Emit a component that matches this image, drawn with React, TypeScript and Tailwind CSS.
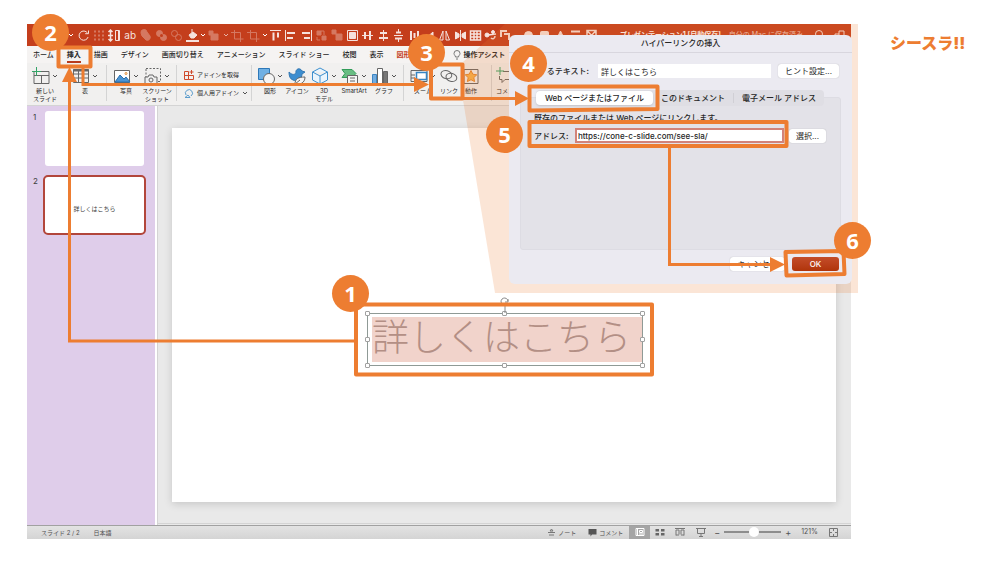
import type { ReactNode } from "react";

const CJK = "font-['Inter','Noto_Sans_CJK_JP',sans-serif]";

const Chevron = ({ className = "text-neutral-600" }: { className?: string }) => (
  <svg viewBox="0 0 6 6" className={`size-[6px] shrink-0 ${className}`} fill="none" stroke="currentColor">
    <path d="M1 2l2 2 2-2" />
  </svg>
);

function Glyph({ children, dim = false }: { children: ReactNode; dim?: boolean }) {
  return (
    <button className={`w-[15px] shrink-0 ${dim ? "opacity-30" : "opacity-85"}`}>
      <svg viewBox="0 0 15 15" className="size-[15px]" fill="none" stroke="white">
        {children}
      </svg>
    </button>
  );
}

function TitleBar() {
  return (
    <header className="flex h-[22px] items-center overflow-hidden bg-[#c43e1c] pl-[41px] text-[7px] text-white">
      <Chevron className="text-white" />
      <div className="ml-[2px] flex w-[124px] shrink-0 items-center justify-between">
        <Glyph>
          <path d="M11.5 5a4.6 4.6 0 1 0 .6 4M12.500 2.500v3.200H9.200" />
        </Glyph>
        <Glyph dim>
          <path d="M2 3.500h11M2 7.500h11M2 11.500h11" strokeWidth="2" strokeDasharray="2 2" />
        </Glyph>
        <Glyph>
          <path d="M3.500 2v11M1.500 4l2-2 2 2M1.500 11l2 2 2-2M1 7.500h5" strokeWidth="1.500" />
          <path d="M8.500 2.500h4v10h-4zM11.500 3v9" />
        </Glyph>
        <button className="w-[15px] text-center text-[10px] leading-none opacity-85">ab</button>
        <Glyph dim>
          <path d="M3 5a3 3 0 0 1 6-1l3 4a3 3 0 0 1-4 4L4 8z" fill="white" />
        </Glyph>
        <Glyph dim>
          <circle cx="5.500" cy="5.500" r="3" fill="white" />
          <circle cx="9.500" cy="9.500" r="3" fill="white" />
          <circle cx="7.500" cy="7.500" r="1.500" fill="#c43e1c" stroke="none" />
        </Glyph>
        <Glyph dim>
          <circle cx="5.500" cy="5.500" r="3" />
          <circle cx="9.500" cy="9.500" r="3" />
        </Glyph>
        <Glyph>
          <path d="M1 13h13" strokeWidth="2" />
          <path d="M4 7l4-3 4 3-3 3H6zM7 1v4" fill="white" />
        </Glyph>
      </div>
      <div className="flex w-[68px] shrink-0 items-center justify-between">
        <Chevron className="text-white" />
        <Glyph dim>
          <path d="M4 6h7v6H4zM2 3h4v4H2z" fill="white" />
        </Glyph>
        <Chevron className="text-white/60" />
        <Glyph dim>
          <path d="M4.500 2v9h9M1 4.500h9.500V14" />
        </Glyph>
        <Glyph dim>
          <path d="M4.500 2v9h9M1 4.500h9.500V14" />
        </Glyph>
        <Chevron className="text-white" />
      </div>
      <div className="flex w-[246px] shrink-0 items-center justify-between">
        <Glyph>
          <path d="M2 2.500h11" />
          <path d="M5.500 4.500v8M10 4.500v5" strokeWidth="2" />
        </Glyph>
        <Glyph>
          <path d="M2.500 2v11" />
          <path d="M4 5h8M4 10h6" strokeWidth="2" />
        </Glyph>
        <Glyph>
          <path d="M12.500 2v11" />
          <path d="M3 5h8M5 10h6" strokeWidth="2" />
        </Glyph>
        <Glyph dim>
          <path d="M3 3h4v4H3zM8 8h4v4H8z" fill="white" />
          <path d="M7 3h3v4M3 9v3h3" />
        </Glyph>
        <Glyph dim>
          <path d="M2 2h4v4H2zM6 6h6v6H6z" fill="white" />
        </Glyph>
        <Glyph>
          <path d="M2.500 2.500h10v10h-10z" />
          <path d="M4.500 4.500h6v6h-6z" fill="white" />
        </Glyph>
        <Glyph>
          <path d="M2 7.500h11" />
          <path d="M5 4v7M10 3v9" strokeWidth="2" />
        </Glyph>
        <Glyph>
          <path d="M7.500 2v11" />
          <path d="M4 5h7M3 10h9" strokeWidth="2" />
        </Glyph>
        <Glyph>
          <path d="M3 7.500h9M7.500 1v3M7.500 11v3" />
          <path d="M5 4.500h5M4 10.500h7" strokeWidth="2" />
        </Glyph>
        <Glyph>
          <path d="M4 3v9M7.500 5v5M11 3v9" strokeWidth="2" />
        </Glyph>
        <Glyph>
          <path d="M2 12l9-8v8z" fill="white" />
        </Glyph>
        <Glyph>
          <path d="M6 3L2.500 12H6zM9 3l3.500 9H9z" />
        </Glyph>
        <Glyph>
          <path d="M7.500 2v11" />
          <path d="M2.500 4v7L6 9V6zM12.500 4v7L9 9V6z" fill="white" />
        </Glyph>
        <Glyph>
          <path d="M2.500 3h10v9h-10zM2.500 6h10M2.500 9h10M6 3v9M9 3v9" strokeWidth="1.500" />
        </Glyph>
        <Glyph>
          <circle cx="4" cy="7" r="2" fill="white" />
          <circle cx="10" cy="4" r="1.500" fill="white" />
          <path d="M5 7l8-1M8 10c2 2 4 0 4-2" strokeWidth="1.500" />
        </Glyph>
        <Glyph>
          <path d="M2 9V3h6M5 6h5v6" strokeWidth="2" />
        </Glyph>
      </div>
      <div className="ml-[7px] flex w-[78px] shrink-0 items-center justify-between">
        <Glyph>
          <circle cx="7.500" cy="7.500" r="4" fill="white" />
        </Glyph>
        <Glyph>
          <rect x="3.500" y="3.500" width="8" height="8" rx="1" fill="white" />
        </Glyph>
        <Glyph>
          <path d="M7.500 3l4.500 9h-9z" fill="white" />
        </Glyph>
        <Glyph>
          <path d="M3 3.500h9M4 8h7" strokeWidth="2" />
        </Glyph>
        <Glyph>
          <path d="M3 2.500h9v9H3zM3 2.500l4.500 5 4.500-5" strokeWidth="1.500" />
        </Glyph>
      </div>
      <span className="ml-[21px] shrink-0 font-bold">プレゼンテーション1 [自動保存]</span>
      <span className="ml-[8px] shrink-0 opacity-70">自分の Mac に保存済み</span>
      <div className="ml-auto flex gap-[5px] pr-1">
        <Glyph>
          <circle cx="7" cy="6" r="3.500" />
          <path d="M9.500 9l3 3" />
        </Glyph>
        <Glyph>
          <path d="M7 3h5v5H7zM7 6H3v5h6V8" />
        </Glyph>
      </div>
    </header>
  );
}

const TABS = ["ホーム", "挿入", "描画", "デザイン", "画面切り替え", "アニメーション", "スライド ショー", "校閲", "表示", "図形"];

function RibbonTabs() {
  return (
    <nav className="flex h-[17px] items-center gap-[13px] overflow-hidden bg-[#f5f3f2] pl-[6px] text-[7px] font-medium whitespace-nowrap text-neutral-800">
      {TABS.map((t) => (
        <button
          key={t}
          className={
            t === "挿入"
              ? "border-b-2 border-[#b83b1d] pt-[2px] leading-[12px] font-bold"
              : t === "図形"
                ? "w-[44px] text-left leading-[12px] font-bold text-[#c43e1c]"
                : "leading-[12px]"
          }
        >
          {t}
        </button>
      ))}
      <button className="flex items-center gap-[2px] leading-[12px] font-bold">
        <svg viewBox="0 0 8 10" className="h-[10px] w-[8px]" fill="none" stroke="#777">
          <path d="M2.500 7C2.500 5.500 1 5 1 3.500a3 3 0 0 1 6 0C7 5 5.500 5.500 5.500 7zM3 9h2" />
        </svg>
        操作アシスト
      </button>
    </nav>
  );
}

function RibbonButton({ label, width, icon, menu = false }: { label: ReactNode; width: string; icon: ReactNode; menu?: boolean }) {
  return (
    <button className={`flex shrink-0 flex-col items-center ${width}`}>
      <span className="flex h-[22px] items-center gap-[2px]">
        <svg viewBox="0 0 18 18" className="size-[18px]" fill="none" stroke="#666">
          {icon}
        </svg>
        {menu && <Chevron />}
      </span>
      <span className="text-center text-[6px] leading-[8px] whitespace-nowrap">{label}</span>
    </button>
  );
}

const Divider = ({ className = "" }: { className?: string }) => <div className={`h-[36px] w-px shrink-0 bg-neutral-300 ${className}`} />;

function Ribbon() {
  return (
    <div className="flex h-[43px] items-start overflow-hidden border-b border-neutral-300 bg-[#f1f0ef] pt-[2px] text-neutral-800">
      <RibbonButton
        width="w-[36px]"
        menu
        label={<>新しい<br />スライド</>}
        icon={<><path d="M2 4.500h15v12H2zM2 8.500h15M9.500 8.500v8" /><path d="M4.500 0v9M0 4.500h9" stroke="#33a366" /></>}
      />
      <RibbonButton
        width="ml-[4px] w-[36px]"
        menu
        label="表"
        icon={<><path d="M1.500 2.500h15v13h-15zM1.500 7h15M1.500 11h15M6.500 3v12M11.500 3v12" /><path d="M1 3.500h16" strokeWidth="2" /></>}
      />
      <Divider className="ml-[3px]" />
      <RibbonButton
        width="ml-[3px] w-[32px]"
        menu
        label="写真"
        icon={<><path d="M1.500 3.500h15v12h-15z" fill="white" /><path d="M2 15l5-7 4 4 2-2 4 5z" fill="#4a94d4" stroke="#2b70ad" /><circle cx="13" cy="6.500" r="1" stroke="#e2882c" /></>}
      />
      <RibbonButton
        width="w-[30px]"
        menu
        label={<>スクリーン<br />ショット</>}
        icon={<><path d="M2 1.500h14.500v13H2z" strokeDasharray="2 1.500" /><path d="M1 10h3l1-2h4l1 2h3v7H1z" fill="#eee" /><circle cx="7" cy="13" r="2" /></>}
      />
      <Divider className="ml-[4px]" />
      <div className="ml-[7px] flex w-[67px] shrink-0 flex-col gap-[8px] pt-[5px] text-[6px] leading-[10px] whitespace-nowrap">
        <button className="flex items-center gap-[3px]">
          <svg viewBox="0 0 10 10" className="size-[10px]" fill="none" stroke="#cf4a2c">
            <path d="M.5 1.500h4v8h-4zM4.500 5.500h5v4h-5zM.5 5.500h4M7.500 0v4M5.500 2h4" />
          </svg>
          アドインを取得
        </button>
        <button className="flex items-center gap-[3px]">
          <svg viewBox="0 0 10 10" className="size-[10px]" fill="none" stroke="#5b9ccc">
            <path d="M2 7a3.500 3.500 0 1 1 5 1M1 9.500h5L4 7z" />
          </svg>
          個人用アドイン
          <Chevron />
        </button>
      </div>
      <Divider />
      <RibbonButton
        width="ml-[3px] w-[30px]"
        menu
        label="図形"
        icon={<><path d="M1.500 1.500h11v11h-11z" fill="#6fb0e4" stroke="#2d78b8" /><circle cx="12" cy="12" r="5.500" fill="#f5f5f5" /></>}
      />
      <RibbonButton
        width="w-[24px]"
        label="アイコン"
        icon={<><path d="M1 5c4 4 6 2 7 1-1-4 4-6 6-2l3 1-3 2c0 5-5 8-9 6C2 12 1 9 1 5z" fill="#3d8ed0" stroke="#3579b3" /><path d="M7 17c0-5 3-7 10-7 0 6-5 8-10 7zM7 17l5-4" fill="#f5f5f5" /></>}
      />
      <RibbonButton
        width="w-[30px]"
        menu
        label={<>3D<br />モデル</>}
        icon={<path d="M9 1l7.500 4v8L9 17l-7.500-4V5zM1.500 5L9 9l7.500-4M9 9v8" fill="#eaf5fd" stroke="#3e90cf" />}
      />
      <RibbonButton
        width="w-[30px]"
        menu
        label="SmartArt"
        icon={<><path d="M1 2.500h10l4 4-4 4H1l3-4z" fill="#69bd83" stroke="#329c59" /><path d="M6.500 8.500h10v8h-10zM9 11h5M9 14h5" fill="#f5f5f5" /></>}
      />
      <RibbonButton
        width="w-[30px]"
        menu
        label="グラフ"
        icon={<><path d="M1.500 7.500h4v9h-4z" fill="#74ade0" stroke="#3c86c4" /><path d="M6.500 1.500h5v15h-5z" fill="white" /><path d="M12.500 4.500h4v12h-4z" fill="#777" /></>}
      />
      <Divider className="ml-[4px]" />
      <RibbonButton
        width="ml-[4px] w-[30px]"
        menu
        label="ズーム"
        icon={<><path d="M1 3.500h16v11H1zM1 8h4M1 11h4" /><path d="M6.500 5.500h10v7h-10z" fill="white" stroke="#3585c4" strokeWidth="1.500" /></>}
      />
      <RibbonButton
        width="w-[22px]"
        label="リンク"
        icon={<><ellipse cx="6.500" cy="7.500" rx="5.500" ry="4" transform="rotate(15 6 7)" /><ellipse cx="11.500" cy="10.500" rx="5.500" ry="4" transform="rotate(15 12 10)" /></>}
      />
      <RibbonButton
        width="w-[22px]"
        label="動作"
        icon={<><path d="M2 2.500h14v14H2z" /><path d="M9 3.500l1.800 3.700 4 .6-3 2.800.8 4L9 12.700l-3.600 1.900.8-4-3-2.800 4-.6z" fill="#f7b24a" stroke="#e4872d" /></>}
      />
      <Divider className="ml-[9px]" />
      <RibbonButton
        width="ml-[2px] w-[22px]"
        label="コメン"
        icon={<><path d="M7 4.500h10v8H9l-3 3v-3H3.500V9" /><path d="M4 0v8M0 4h8" stroke="#33a366" /></>}
      />
    </div>
  );
}

function Thumbnails() {
  return (
    <aside className="w-[128px] shrink-0 bg-[#dfcdea] pt-[5px] text-[8px] text-neutral-700">
      <div className="flex gap-[10px] pl-[6px]">
        <span className="w-[2px]">1</span>
        <div className="h-[55px] w-[99px] rounded-[3px] bg-white" />
      </div>
      <div className="mt-[9px] flex gap-[8px] pl-[6px]">
        <span className="w-[2px]">2</span>
        <div className="flex h-[60px] w-[103px] items-center justify-center rounded-[5px] border-2 border-[#b2463b] bg-white pt-[6px] text-[6px]">
          詳しくはこちら
        </div>
      </div>
    </aside>
  );
}

function SelectedText() {
  const handles = ["-left-[3px] -top-[3px]", "left-1/2 -ml-[3px] -top-[3px]", "-right-[3px] -top-[3px]", "-left-[3px] top-1/2 -mt-[3px]", "-right-[3px] top-1/2 -mt-[3px]", "-left-[3px] -bottom-[3px]", "left-1/2 -ml-[3px] -bottom-[3px]", "-right-[3px] -bottom-[3px]"];
  return (
    <div className="absolute top-[185px] left-[195px] w-[276px] border border-[#8f9a96] py-[3px] pl-[4px]">
      <div className="h-[45px] bg-[#f1d3cb] font-['Noto_Sans_CJK_JP',sans-serif] text-[37px] leading-[37px] font-extralight whitespace-nowrap text-[#b38f85]">
        詳しくはこちら
      </div>
      {handles.map((h) => (
        <span key={h} className={`absolute size-[5px] rounded-[1px] border border-neutral-400 bg-white ${h}`} />
      ))}
      <svg viewBox="0 0 10 16" className="absolute -top-[17px] left-1/2 -ml-[5px] h-[16px] w-[10px]" fill="none" stroke="#888">
        <path d="M8 4a3.500 3.500 0 1 0-1 3M8 2v3H5M5 8v8" />
      </svg>
    </div>
  );
}

function StatusBar() {
  return (
    <footer className="flex h-[14px] items-center border-t border-neutral-400 bg-linear-to-b from-[#e3e3e3] to-[#d4d4d4] pl-[14px] text-[6px] text-neutral-600">
      <span>スライド 2 / 2</span>
      <span className="ml-[14px]">日本語</span>
      <div className="ml-auto flex h-full items-center pr-[13px]">
        <button className="flex items-center gap-[2px]">
          <svg viewBox="0 0 9 9" className="size-[9px]" fill="none" stroke="#777">
            <path d="M1 4.500h7M2 7h5M3 3l1.500-2L6 3z" />
          </svg>
          ノート
        </button>
        <button className="ml-[12px] flex items-center gap-[2px]">
          <svg viewBox="0 0 9 9" className="size-[9px]" fill="#555">
            <path d="M.5 1h8v5.500H4L2.500 8.500v-2h-2z" />
          </svg>
          コメント
        </button>
        <button className="ml-[6px] flex h-full w-[21px] items-center justify-center bg-[#a5a5a5]">
          <svg viewBox="0 0 10 10" className="size-[10px]" fill="none" stroke="white">
            <path d="M1 1.500h8v7H1zM2.500 2v6M4.500 3.500h3v2h-3zM4 7h4" />
          </svg>
        </button>
        <button className="ml-[5px]">
          <svg viewBox="0 0 10 10" className="size-[10px]" fill="#666">
            <path d="M.5 2H4v2.500H.5zM6 2h3.500v2.500H6zM.5 6H4v2.500H.5zM6 6h3.500v2.500H6z" />
          </svg>
        </button>
        <button className="ml-[10px]">
          <svg viewBox="0 0 10 10" className="size-[10px]" fill="none" stroke="#777">
            <path d="M0 1.500h10M1 8.500V3h3v4.500M6 7.500V3h3v5.500M1 8h3M6 8h3" />
          </svg>
        </button>
        <button className="ml-[11px]">
          <svg viewBox="0 0 10 10" className="size-[10px]" fill="none" stroke="#777">
            <path d="M0 1.500h10M1.500 2v4.500h7V2M5 6.500v3M3 9.500h4" />
          </svg>
        </button>
        <button className="ml-[8px] text-[9px] leading-none">−</button>
        <input
          type="range"
          aria-label="ズーム"
          defaultValue={53}
          className="ml-[4px] h-[10px] w-[57px] appearance-none bg-transparent [&::-webkit-slider-runnable-track]:h-[2px] [&::-webkit-slider-runnable-track]:bg-[#8d8d8d] [&::-webkit-slider-thumb]:-mt-[4px] [&::-webkit-slider-thumb]:size-[10px] [&::-webkit-slider-thumb]:appearance-none [&::-webkit-slider-thumb]:rounded-full [&::-webkit-slider-thumb]:bg-white"
        />
        <button className="ml-[4px] text-[9px] leading-none">+</button>
        <span className="ml-[10px] text-[7px]">121%</span>
        <button className="ml-[11px]">
          <svg viewBox="0 0 9 9" className="size-[9px]" fill="none" stroke="#777">
            <path d="M.5.5h8v8h-8zM4.500 1v2M4.500 6v2M1 4.500h2M6 4.500h2" />
          </svg>
        </button>
      </div>
    </footer>
  );
}

function LinkDialog() {
  const button = "h-[14px] rounded-[3px] bg-white shadow-[0_0_1px_rgba(0,0,0,0.3)]";
  return (
    <div role="dialog" aria-labelledby="dlg" className="absolute top-[35px] left-[509px] h-[249px] w-[343px] rounded-[6px] bg-[#ebeaf1] text-[8px] leading-[12px] whitespace-nowrap text-neutral-800">
      <h2 id="dlg" className="h-[18px] border-b border-[#d8d6de] pt-[2px] text-center font-medium">
        ハイパーリンクの挿入
      </h2>
      <div className="mt-[11px] flex items-center px-[13px]">
        <label htmlFor="shown" className="w-[67px] text-right font-medium">
          るテキスト:
        </label>
        <input id="shown" defaultValue="詳しくはこちら" className="ml-[9px] h-[14px] min-w-0 flex-1 bg-white px-[3px]" />
        <button className={`ml-[7px] w-[61px] ${button}`}>ヒント設定...</button>
      </div>
      <div className="mx-[11px] mt-[19px] h-[153px] rounded-[3px] border border-[#dddce3] bg-[#e3e2e8] px-[13px]">
        <div role="tablist" className="-mt-[8px] ml-[2px] flex h-[16px] w-[288px] items-center rounded-[4px] bg-[#dfdee4]">
          <button role="tab" aria-selected="true" className="h-[14px] w-[117px] rounded-[4px] bg-white font-medium shadow-sm">
            Web ページまたはファイル
          </button>
          <button role="tab" className="w-[80px] font-medium">
            このドキュメント
          </button>
          <button role="tab" className="flex-1 border-l border-[#d0cfd5] leading-[10px] font-medium">
            電子メール アドレス
          </button>
        </div>
        <p className="mt-[6px] font-medium">既存のファイルまたは Web ページにリンクします。</p>
        <div className="mt-[4px] flex items-center">
          <label htmlFor="address" className="w-[36px] font-medium">
            アドレス:
          </label>
          <input id="address" defaultValue="https://cone-c-slide.com/see-sla/" className="ml-[5px] h-[15px] w-[209px] border-2 border-[#d2837a] bg-white px-px font-medium" />
          <button className={`ml-[5px] w-[37px] ${button}`}>選択...</button>
        </div>
      </div>
      <div className="mt-[7px] flex justify-end gap-[7px] pr-[13px]">
        <button className={`w-[55px] ${button}`}>キャンセル</button>
        <button className="h-[14px] w-[47px] rounded-[3px] bg-linear-to-b from-[#c44d29] to-[#b03408] font-medium text-white">OK</button>
      </div>
    </div>
  );
}

const STEPS = [
  { n: 1, place: "left-[332px] top-[275px]" },
  { n: 2, place: "left-[32px] top-[14px]" },
  { n: 3, place: "left-[408px] top-[34px]" },
  { n: 4, place: "left-[510px] top-[45px]" },
  { n: 5, place: "left-[486px] top-[116px]" },
  { n: 6, place: "left-[834px] top-[222px]" },
];

function Annotations() {
  return (
    <div className="pointer-events-none absolute top-0 left-0">
      <svg width="900" height="400" viewBox="0 0 900 400" fill="none" stroke="#ed7d31" strokeWidth="3">
        <path d="M356 341H69.500V80M83 67v17.500H416M464 98.500H516M669.500 147V264.500H770" />
        <g strokeWidth="4" strokeLinejoin="round">
          <path d="M356 304.500h296v70H356z" />
          <path d="M58.500 47.500h32v19h-32z" />
          <path d="M431 64.500h31.500v34H431z" />
          <path d="M529.500 86.500h128v22.500l-128 1.500z" />
          <path d="M529.500 122h257v24h-257z" />
          <path d="M785.500 252l58-1 1 23-58 1.500z" />
        </g>
        <path stroke="none" fill="#ed7d31" d="M69.500 67l7.500 15H62zM429 84.500l-15 7.500V77zM529 98.500l-14 7.500V91zM785 264.500l-15 7.500v-15z" />
      </svg>
      {STEPS.map((s) => (
        <span
          key={s.n}
          className={`absolute flex size-[37px] items-center justify-center rounded-full bg-[#ed7d31] pb-[2px] font-['Open_Sans',sans-serif] text-[22px] leading-none font-bold text-white ${s.place}`}
        >
          {s.n}
        </span>
      ))}
    </div>
  );
}

export default function App() {
  return (
    <main className={`relative flex items-start bg-white pt-6 pb-6 pl-[27px] ${CJK}`}>
      <section className="min-w-0 flex-1">
        <TitleBar />
        <RibbonTabs />
        <Ribbon />
        <div className="flex">
          <Thumbnails />
          <div className="ml-[2px] min-w-0 flex-1 border-l border-neutral-300 bg-[#e9e9e9]">
            <div className="border-b border-neutral-300 pt-[22px] pr-[15px] pb-[21px] pl-[14px]">
              <div className="relative aspect-video bg-white shadow-[0_2px_8px_rgba(0,0,0,0.15)]">
                <SelectedText />
              </div>
            </div>
            <div className="h-px" />
          </div>
        </div>
        <StatusBar />
      </section>
      <div className="w-[150px] shrink-0 pt-[7px] pl-[39px] text-[16px] leading-[24px] font-black text-[#ed7d31]">シースラ!!</div>

      {/* highlight fanning out from the link button to the dialog */}
      <svg width="860" height="300" viewBox="0 0 860 300" className="pointer-events-none absolute top-0 left-0">
        <path d="M463 62L505 24H858V293H495L463 100z" fill="#ed7d31" fillOpacity="0.2" />
      </svg>
      <LinkDialog />
      <Annotations />
    </main>
  );
}
